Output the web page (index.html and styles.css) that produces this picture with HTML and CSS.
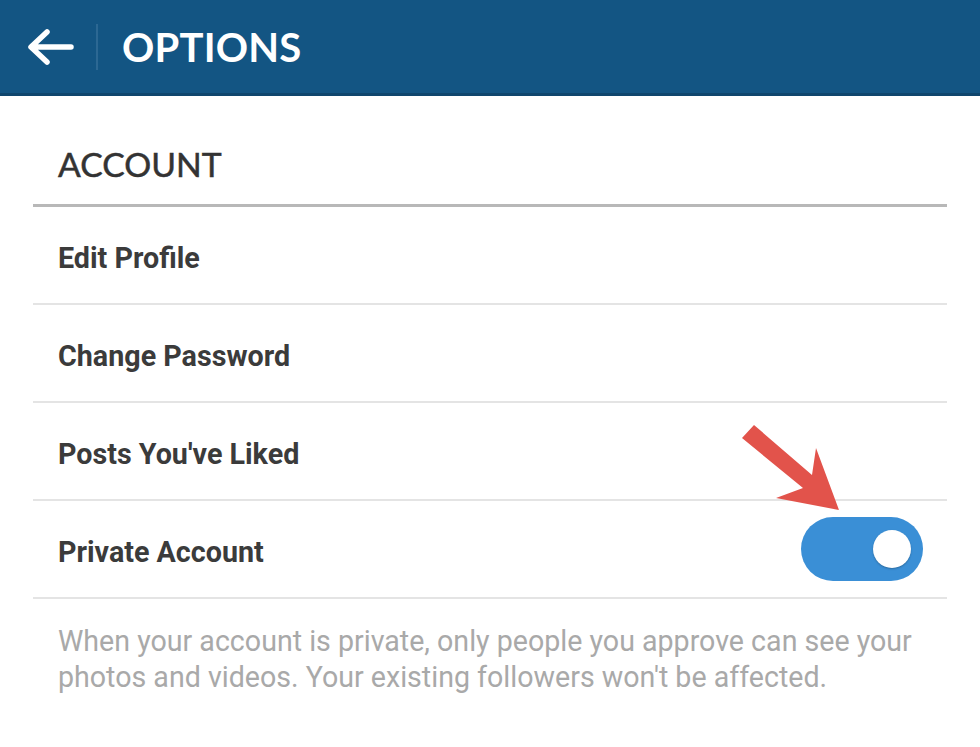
FILE: index.html
```html
<!DOCTYPE html>
<html lang="en">
<head>
<meta charset="utf-8">
<title>Options</title>
<link rel="stylesheet" href="styles.css">
</head>
<body>
<header class="topbar">
  <button class="back" aria-label="Back">
    <svg width="48" height="38" viewBox="0 0 48 38"><path d="M45 19H6M21 4L5 19l16 15" fill="none" stroke="#fff" stroke-width="5.5" stroke-linecap="round" stroke-linejoin="round"/></svg>
  </button>
  <span class="divider"></span>
  <h1 class="title">OPTIONS</h1>
</header>
<main class="content">
  <h2 class="section-title">ACCOUNT</h2>
  <ul class="list">
    <li class="row">Edit Profile</li>
    <li class="row">Change Password</li>
    <li class="row">Posts You've Liked</li>
    <li class="row row-toggle">
      <span>Private Account</span>
      <span class="toggle"><span class="knob"></span></span>
      <svg class="pointer" width="110" height="95" viewBox="0 0 110 95"><path d="M2 13L14 0L72 50L76 23L99 85L36 73L63 63Z" fill="#e2534b"/></svg>
    </li>
  </ul>
  <p class="note">When your account is private, only people you approve can see your photos and videos. Your existing followers won't be affected.</p>
</main>
</body>
</html>
```
FILE: styles.css
```css
* { box-sizing: border-box; }
html, body { margin: 0; padding: 0; background: #fff; }
body { width: 980px; height: 747px; overflow: hidden; font-family: Roboto, "Liberation Sans", sans-serif; }

.topbar {
  height: 96px;
  background: #135583;
  border-bottom: 3px solid #0f466d;
  display: flex;
  align-items: center;
  padding-left: 26px;
}
.back {
  background: none; border: 0; padding: 0; margin: 0;
  width: 48px; height: 38px; display: flex;
}
.divider {
  width: 2px; height: 46px;
  background: #2c6893;
  margin-left: 22px;
}
.title {
  margin: 0 0 0 24px;
  font-family: Lato, "Open Sans", sans-serif;
  font-weight: 700;
  font-size: 40px;
  color: #fff;
  letter-spacing: 0.2px;
}

.content { padding: 0 33px; }
.section-title {
  margin: 0;
  height: 111px;
  display: flex; align-items: center;
  padding-left: 25px; padding-top: 28px;
  font-family: Lato, "Open Sans", sans-serif;
  font-weight: 400;
  font-size: 33.7px;
  color: #333;
  -webkit-text-stroke: 0.5px #333;
  border-bottom: 3px solid #b8b8b8;
}
.list { list-style: none; margin: 0; padding: 0; }
.row {
  height: 98px;
  display: flex; align-items: center;
  padding-left: 25px; padding-top: 5px;
  font-size: 28.7px;
  font-weight: 700;
  color: #3b3b3b;
  border-bottom: 2px solid #e4e4e4;
}
.row-toggle { position: relative; justify-content: space-between; padding-right: 24px; padding-top: 0; }
.row-toggle > span:first-child { padding-top: 5px; }
.toggle {
  width: 122px; height: 64px;
  border-radius: 32px;
  background: #3a8fd6;
  display: flex; align-items: center; justify-content: flex-end;
  padding-right: 12px;
}
.knob {
  width: 38px; height: 38px; border-radius: 50%;
  background: #fff;
  box-shadow: 0 1px 2px rgba(0,0,0,0.25);
}
.pointer { position: absolute; left: 707px; top: -76px; }
.note {
  margin: 24px 0 0 25px;
  font-size: 28.6px;
  line-height: 36px;
  color: #a9a9a9;
}
```
